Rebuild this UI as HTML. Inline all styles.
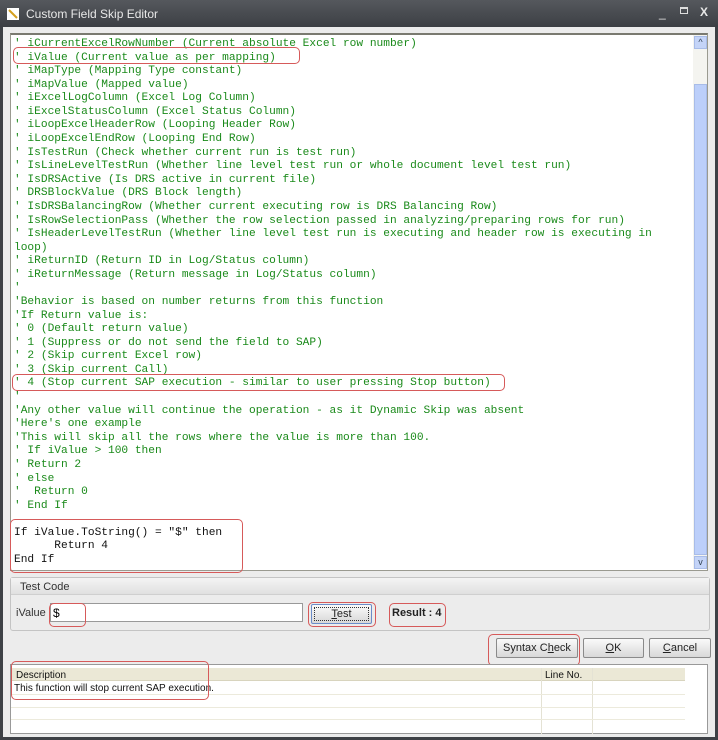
<!DOCTYPE html>
<html><head><meta charset="utf-8"><style>
*{margin:0;padding:0;box-sizing:border-box}
body{width:718px;height:740px;background:#3e4146;position:relative;overflow:hidden;font-family:"Liberation Sans",sans-serif}
.abs{position:absolute}
#title{left:0;top:0;width:718px;height:27px;background:linear-gradient(#55585d,#3c3f44);color:#e8e8e8;font-size:12px}
#client{left:3px;top:27px;width:712px;height:710px;background:#ececec}
#code{left:10px;top:33px;width:698px;height:538px;background:#fff;border:1px solid #9a9a90;border-top:2px solid #7a7a70}
pre{position:absolute;left:3px;top:3px;font-family:"Liberation Mono",monospace;font-size:11.2px;line-height:13.58px;color:#1a8a1a}
.k{color:#111}
.rb{position:absolute;border:1.5px solid #d65a5a;border-radius:5px}
.btn{position:absolute;height:20px;border:1px solid #8a8a8a;border-radius:2px;background:linear-gradient(#fafafa,#d8d8d8);font-size:11px;text-align:center;line-height:18px;color:#222}
</style></head><body>
<div id="title" class="abs">
<svg class="abs" style="left:6px;top:7px" width="14" height="14"><rect x="1" y="1" width="12" height="12" fill="#fff"/><path d="M3 3 L11 11" stroke="#d4a020" stroke-width="2"/></svg>
<span class="abs" style="left:26px;top:7px">Custom Field Skip Editor</span>
<span class="abs" style="left:659px;top:6px;font-size:12px">_</span>
<span class="abs" style="left:680px;top:7px;width:8px;height:7px;border:1px solid #ddd;border-top-width:2px"></span>
<span class="abs" style="left:700px;top:5px;font-size:12px;font-weight:bold">X</span>
</div>
<div id="client" class="abs"></div>
<div id="code" class="abs">
<pre>' iCurrentExcelRowNumber (Current absolute Excel row number)
' iValue (Current value as per mapping)
' iMapType (Mapping Type constant)
' iMapValue (Mapped value)
' iExcelLogColumn (Excel Log Column)
' iExcelStatusColumn (Excel Status Column)
' iLoopExcelHeaderRow (Looping Header Row)
' iLoopExcelEndRow (Looping End Row)
' IsTestRun (Check whether current run is test run)
' IsLineLevelTestRun (Whether line level test run or whole document level test run)
' IsDRSActive (Is DRS active in current file)
' DRSBlockValue (DRS Block length)
' IsDRSBalancingRow (Whether current executing row is DRS Balancing Row)
' IsRowSelectionPass (Whether the row selection passed in analyzing/preparing rows for run)
' IsHeaderLevelTestRun (Whether line level test run is executing and header row is executing in
loop)
' iReturnID (Return ID in Log/Status column)
' iReturnMessage (Return message in Log/Status column)
'
'Behavior is based on number returns from this function
'If Return value is:
' 0 (Default return value)
' 1 (Suppress or do not send the field to SAP)
' 2 (Skip current Excel row)
' 3 (Skip current Call)
' 4 (Stop current SAP execution - similar to user pressing Stop button)
'
'Any other value will continue the operation - as it Dynamic Skip was absent
'Here's one example
'This will skip all the rows where the value is more than 100.
' If iValue &gt; 100 then
' Return 2
' else
'  Return 0
' End If

<span class="k">If iValue.ToString() = "$" then
      Return 4
End If</span></pre>
<div class="abs" style="left:682px;top:0;width:14px;height:534px;background:#f4f4f0"></div>
<div class="abs" style="left:683px;top:1px;width:13px;height:13px;background:#c4d4f8;border:1px solid #a8bce8;font-size:9px;color:#345;text-align:center;line-height:11px">&#94;</div>
<div class="abs" style="left:683px;top:49px;width:13px;height:471px;background:#bccffa;border:1px solid #a8bce8"></div>
<div class="abs" style="left:683px;top:521px;width:13px;height:13px;background:#c4d4f8;border:1px solid #a8bce8;font-size:9px;color:#345;text-align:center;line-height:11px">v</div>
</div>
<div class="rb" style="left:13px;top:47px;width:287px;height:17px"></div>
<div class="rb" style="left:12px;top:374px;width:493px;height:17px"></div>
<div class="rb" style="left:10px;top:519px;width:233px;height:54px"></div>
<div class="abs" style="left:10px;top:577px;width:700px;height:54px;border:1px solid #c4c4c4;border-radius:3px;background:#ececec"></div>
<div class="abs" style="left:11px;top:578px;width:698px;height:17px;background:linear-gradient(#f4f4f4,#e0e0e0);border-bottom:1px solid #cfcfcf;font-size:11px;color:#333;padding:3px 0 0 9px">Test Code</div>
<span class="abs" style="left:16px;top:607px;font-size:11px;color:#333">iValue :</span>
<div class="abs" style="left:50px;top:603px;width:253px;height:19px;background:#fff;border:1px solid #999;font-size:12px;padding:2px 0 0 2px">$</div>
<div class="rb" style="left:49px;top:603px;width:37px;height:24px"></div>
<div class="btn" style="left:311px;top:604px;width:61px;border:1px solid #6b8cc8;outline:1px dotted #333;outline-offset:-4px"><u>T</u>est</div>
<div class="rb" style="left:308px;top:602px;width:68px;height:25px"></div>
<span class="abs" style="left:392px;top:607px;font-size:11px;font-weight:bold;color:#222">Result : 4</span>
<div class="rb" style="left:389px;top:603px;width:57px;height:24px"></div>
<div class="btn" style="left:496px;top:638px;width:82px">Syntax C<u>h</u>eck</div>
<div class="rb" style="left:488px;top:634px;width:92px;height:32px"></div>
<div class="btn" style="left:583px;top:638px;width:61px"><u>O</u>K</div>
<div class="btn" style="left:649px;top:638px;width:62px"><u>C</u>ancel</div>
<div class="abs" style="left:10px;top:664px;width:698px;height:70px;background:#fff;border:1px solid #999">
<div class="abs" style="left:0;top:3px;width:674px;height:13px;background:#ebe8d6;border-bottom:1px solid #d8d4be"></div>
<span class="abs" style="left:5px;top:5px;font-size:10px;color:#111">Description</span>
<span class="abs" style="left:534px;top:5px;font-size:10px;color:#111">Line No.</span>
<div class="abs" style="left:530px;top:3px;width:1px;height:66px;background:#e4e2d4"></div>
<div class="abs" style="left:581px;top:3px;width:1px;height:66px;background:#e4e2d4"></div>
<div class="abs" style="left:0;top:29px;width:674px;height:1px;background:#eceadc"></div>
<div class="abs" style="left:0;top:42px;width:674px;height:1px;background:#eceadc"></div>
<div class="abs" style="left:0;top:54px;width:674px;height:1px;background:#eceadc"></div>
<span class="abs" style="left:3px;top:18px;font-size:10px;color:#111">This function will stop current SAP execution.</span>
</div>
<div class="rb" style="left:11px;top:661px;width:198px;height:39px"></div>
</body></html>
